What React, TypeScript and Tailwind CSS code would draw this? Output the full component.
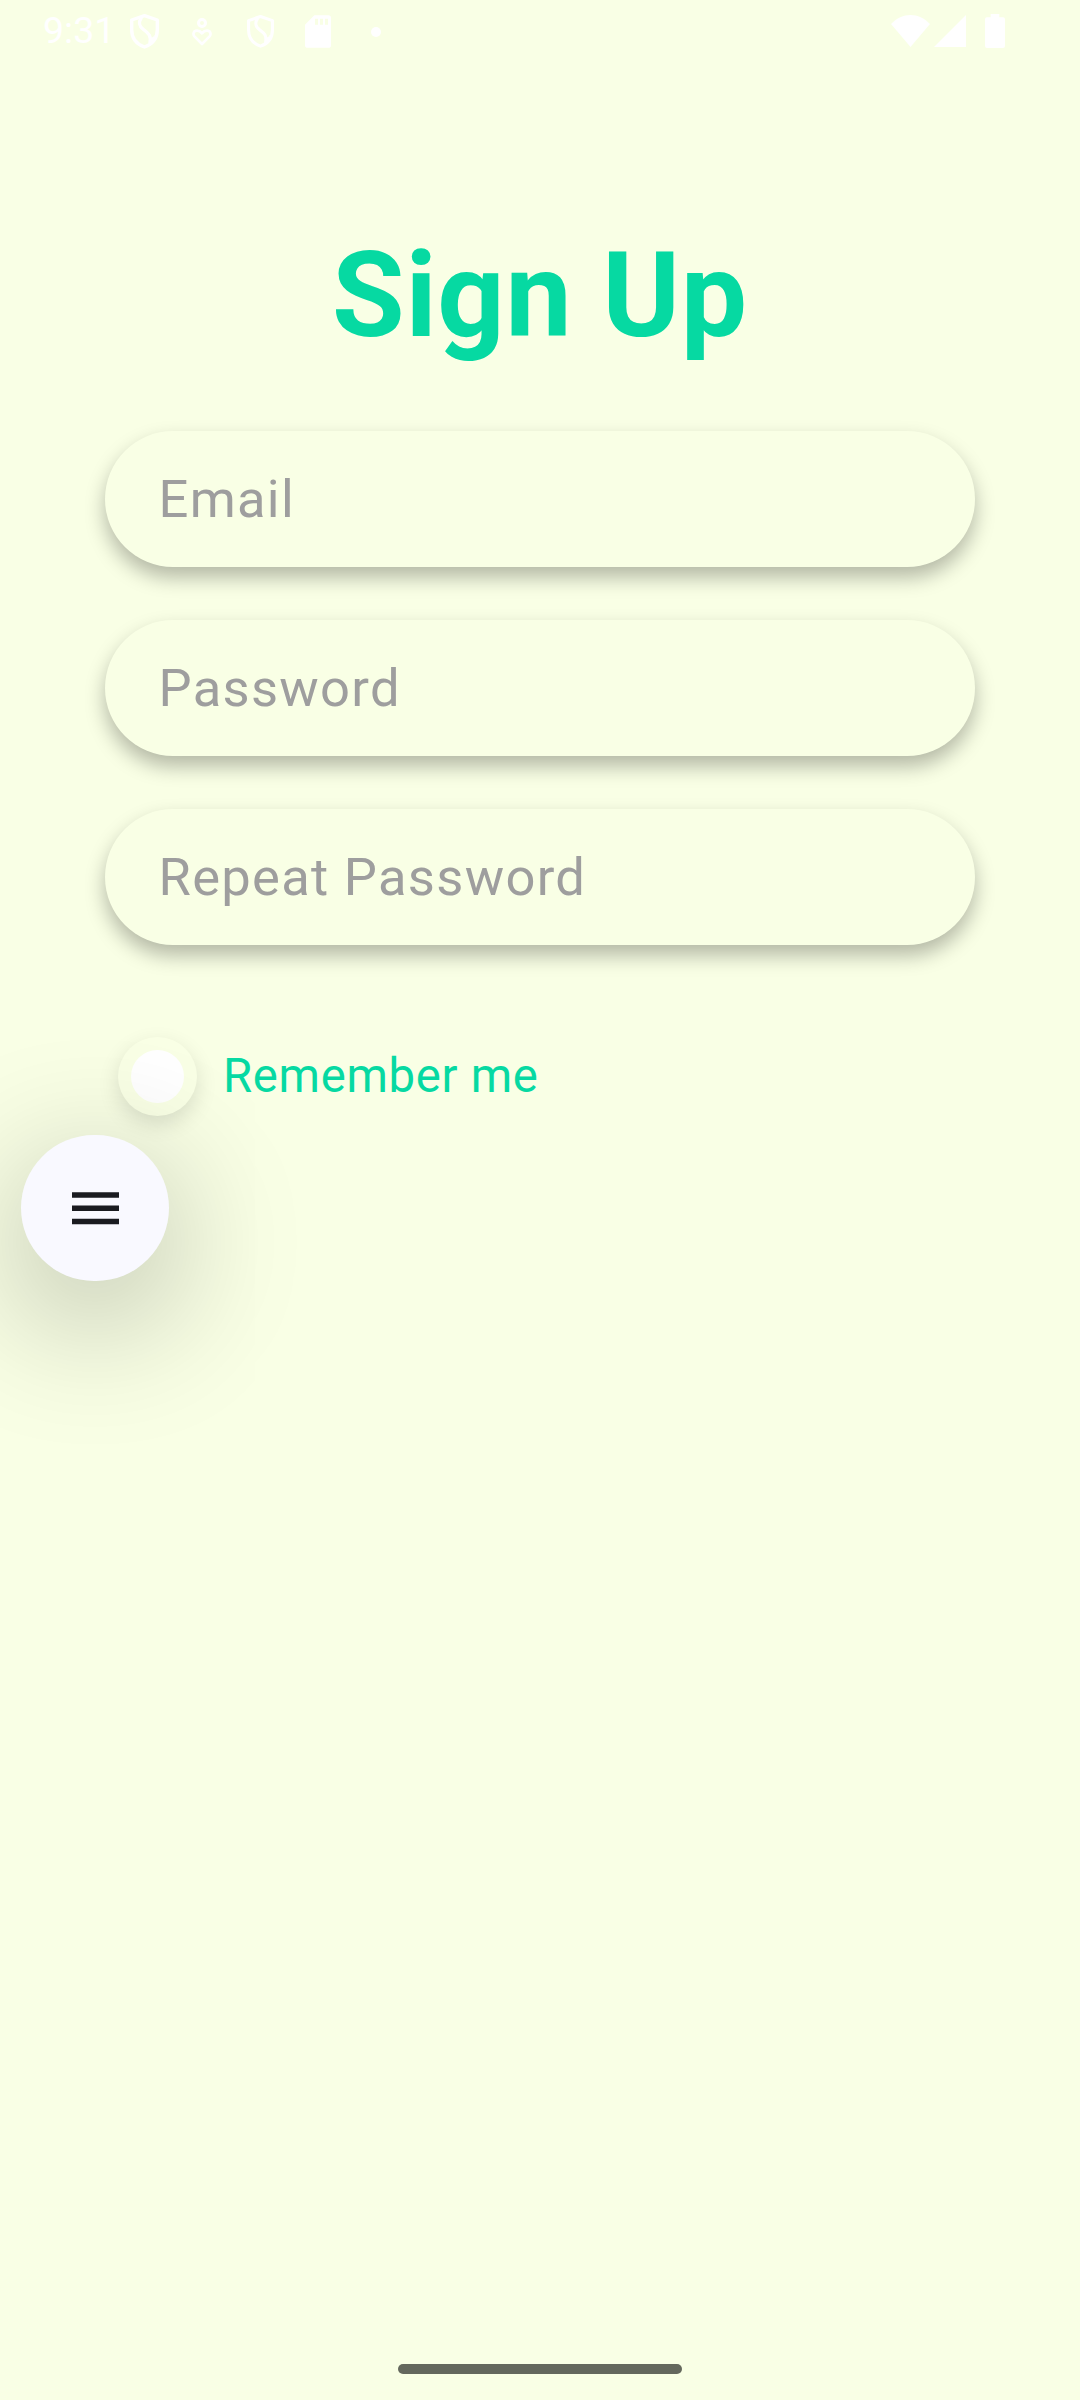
import React from "react";

function ShieldIcon({ className }: { className: string }) {
  return (
    <svg className={className} viewBox="0 0 86 106" preserveAspectRatio="none" fill="none">
      <path
        d="M43 5 L81 18 V48 C81 74 66 92 43 100 C20 92 5 74 5 48 V18 Z"
        stroke="white"
        strokeWidth="10"
        strokeLinejoin="round"
      />
      <path
        d="M34 10 C23 28 28 38 40 47 C55 58 64 66 59 90"
        stroke="white"
        strokeWidth="10"
      />
      <path d="M60 72 Q68 74 74 62 L66 88 Z" fill="white" />
    </svg>
  );
}

function CareIcon() {
  return (
    <svg className="h-7 w-5" viewBox="0 0 60 84" fill="none" stroke="white">
      <circle cx="30" cy="15" r="10.5" strokeWidth="9" />
      <path
        d="M30 78 L8 56 C1 48 5 38 15 38 C22 38 26 41 30 46 C34 41 38 38 45 38 C55 38 59 48 52 56 Z"
        strokeWidth="8"
        strokeLinejoin="round"
      />
    </svg>
  );
}

function SdCardIcon() {
  return (
    <svg className="h-[33px] w-[26px]" viewBox="0 0 78 98" fill="white">
      <path
        fillRule="evenodd"
        d="M28 0 H70 Q78 0 78 8 V90 Q78 98 70 98 H8 Q0 98 0 90 V29 Z M30 11 V29 H39 V11 Z M45 11 V29 H54 V11 Z M60 11 V29 H69 V11 Z"
      />
    </svg>
  );
}

function StatusBar() {
  return (
    <header className="flex h-16 items-center text-white">
      <span className="mb-[3px] ml-[43px] w-[87px] text-[37.5px] leading-none">9:31</span>
      <ShieldIcon className="mb-px h-[35px] w-[29px]" />
      <span className="mb-px ml-[33px] flex"><CareIcon /></span>
      <ShieldIcon className="mb-px ml-[35px] h-[33px] w-[27px]" />
      <span className="mb-px ml-[31px] flex"><SdCardIcon /></span>
      <span className="mb-px ml-[40px] size-[10px] rounded-full bg-white" />
      <svg className="mb-[3px] ml-auto h-8 w-[39px]" viewBox="0 0 117 96" fill="white">
        <path d="M58.500 96 L0 27 C34 -9 83 -9 117 27 Z" />
      </svg>
      <svg className="mb-[3px] ml-1 h-8 w-8" viewBox="0 0 96 96" fill="white">
        <path d="M96 0 V96 H0 Z" />
      </svg>
      <svg className="mr-[75px] mb-[3px] ml-[19px] h-[34px] w-5" viewBox="0 0 60 102" fill="white">
        <path d="M17 0 H43 V10 H54 Q60 10 60 16 V96 Q60 102 54 102 H6 Q0 102 0 96 V16 Q0 10 6 10 H17 Z" />
      </svg>
    </header>
  );
}

function Field({ label }: { label: string }) {
  return (
    <div className="flex h-[136px] items-center rounded-full bg-[#f9ffe5] px-[53.5px] text-[52.5px] leading-none tracking-[1.3px] text-[#9e9e9e] shadow-[0_10.5px_20px_rgba(0,0,0,0.28)]">
      {label}
    </div>
  );
}

export default function App() {
  return (
    <div className="relative flex h-[2400px] w-[1080px] flex-col overflow-hidden bg-[#f9ffe5] font-['Roboto',sans-serif]">
      <StatusBar />
      <h1 className="mt-[163px] h-[138px] text-center text-[118px] leading-[138px] font-bold tracking-[0.7px] text-[#06d9a2]">
        Sign Up
      </h1>
      <main className="mx-[105px] mt-[66px] flex flex-col gap-[53px]">
        <Field label="Email" />
        <Field label="Password" />
        <Field label="Repeat Password" />
      </main>
      <label className="mt-[92px] ml-[118px] flex h-[79px] items-center gap-[26px]">
        <span className="flex size-[79px] items-center justify-center rounded-full bg-[#f9ffe5] shadow-[0_8px_21px_rgba(0,0,0,0.12)]">
          <span className="size-[53px] rounded-full bg-white" />
        </span>
        <span className="text-[47.25px] leading-none tracking-[0.7px] text-[#06d9a2]">Remember me</span>
      </label>
      <button className="absolute top-[1135px] left-[21px] flex h-[146px] w-[148px] items-center justify-center rounded-[73px] bg-[#f9f9ff] shadow-[0_34px_138px_rgba(0,0,0,0.31)]">
        <svg className="ml-px h-[33px] w-[47px]" viewBox="0 0 47 33" fill="#1a1b20">
          <path d="M0 .3H47V5.700H0zM0 13.500H47V18.900H0zM0 26.800H47V32.200H0z" />
        </svg>
      </button>
      <div className="mt-auto mb-[26px] h-[10px] w-[284px] self-center rounded-full bg-[#64685d]" />
    </div>
  );
}
